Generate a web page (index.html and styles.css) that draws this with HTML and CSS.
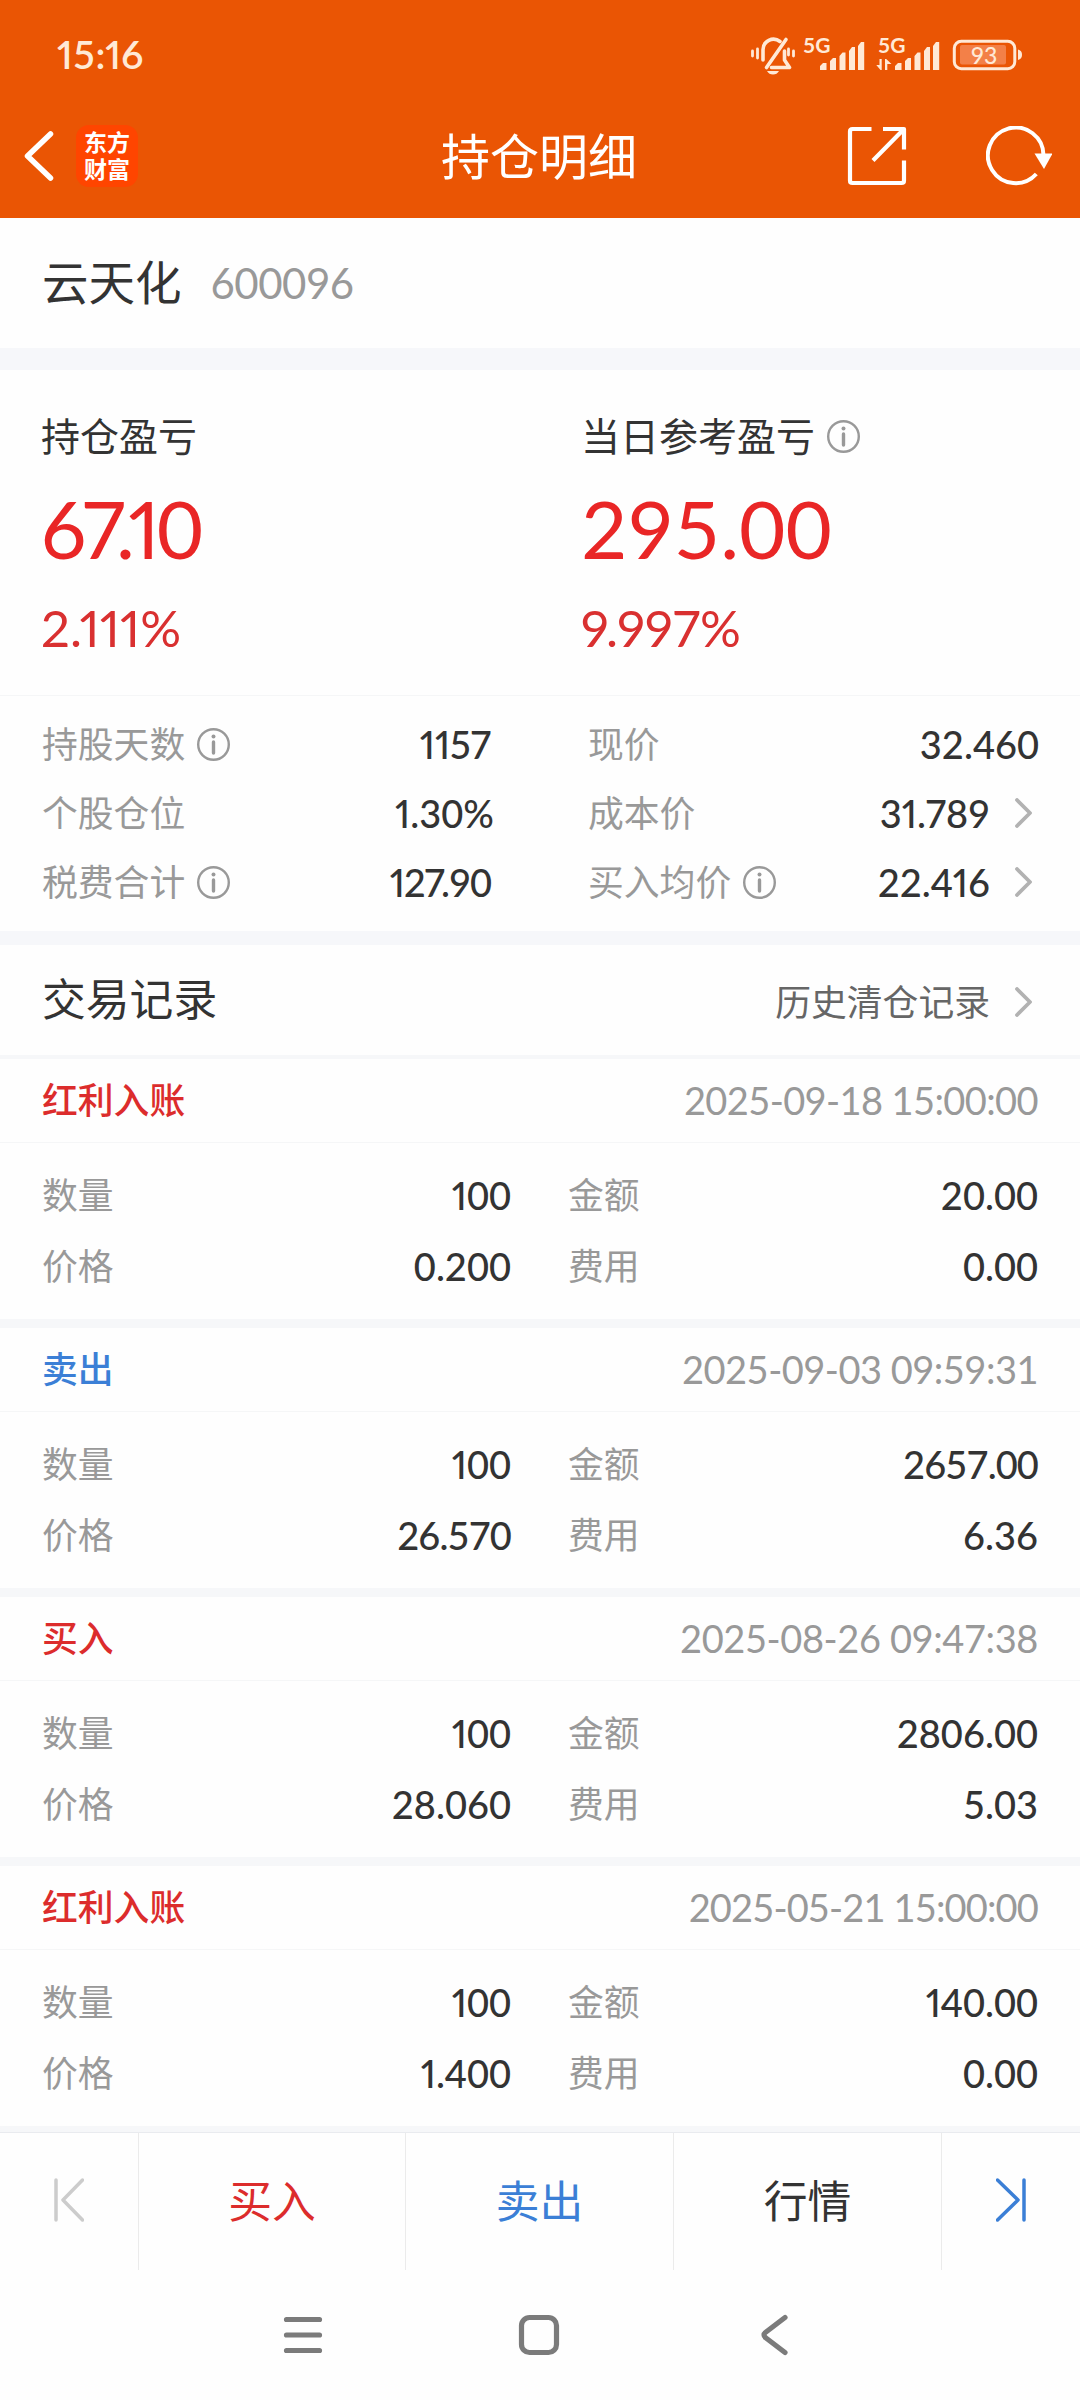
FILE: index.html
```html
<!DOCTYPE html>
<html lang="zh-CN">
<head>
<meta charset="utf-8">
<title>持仓明细</title>
<link rel="stylesheet" href="styles.css">
</head>
<body>
<svg class="defs" width="0" height="0" aria-hidden="true">
  <symbol id="info" viewBox="0 0 33 33"><circle cx="16.5" cy="16.5" r="15.3" fill="none" stroke="currentColor" stroke-width="2.4"/><circle cx="16.5" cy="8.4" r="2" fill="currentColor"/><path d="M16.5 14v11" stroke="currentColor" stroke-width="3.4" stroke-linecap="round"/></symbol>
  <symbol id="chevron" viewBox="0 0 17 30"><path d="M2 2l13 13-13 13" fill="none" stroke="currentColor" stroke-width="3.8" stroke-linecap="round" stroke-linejoin="round"/></symbol>
</svg>

<header class="top">
  <div class="status">
    <time class="clock"><i>1</i>5:<i>1</i>6</time>
    <svg class="status-icons" viewBox="750 27 274 54" fill="none" stroke="#ffe9d6">
      <g stroke-width="3.6" stroke-linecap="round" stroke-linejoin="round">
        <path d="M766.500 66.500L786 38.500"/>
        <path d="M763 59V49a10.500 10.500 0 0 1 17-8.500M784.500 50v9l5 7.500H771.500"/>
        <path d="M752.500 50v5M757.500 48v9M788.500 48v6M793.500 50v5" stroke-width="2.800"/>
      </g>
      <path d="M767 70h12q-2 3.500-6 3.500t-6-3.500z" fill="#ffe9d6" stroke="none"/>
      <g fill="#ffe9d6" stroke="none">
        <path id="bars" d="M820 65l3-3h3.500v7H820zM830 60l3-3h3v12h-6zM839.500 55l3-3.500h3V69h-6zM849 50l3-4h3v23h-6zM858 45l3-4h3.200v28H858z"/>
        <use href="#bars" x="75"/>
        <path d="M879.500 58h2.200v11h-1.200l-4.200-5h3.200zM885 58h1.200l5.300 5h-4.200v6H885z"/>
        <text class="net" x="803" y="52">5G</text>
        <text class="net" x="878" y="52">5G</text>
        <path d="M1018 48.500q4 1 4 5.200t-4 5.200z"/>
      </g>
      <rect x="954.300" y="40.300" width="60.500" height="27.400" rx="7" stroke-width="3"/>
      <rect x="960" y="44" width="46" height="19.500" rx="2" fill="#f38048" stroke="none"/>
      <text class="level" x="984" y="62.500" fill="#ffe9d6" stroke="none" text-anchor="middle">93</text>
    </svg>
  </div>
  <nav class="titlebar">
    <div class="side">
      <svg class="back" viewBox="0 0 30 50"><path d="M27 3L4 25l23 22" fill="none" stroke="#fff" stroke-width="5.500" stroke-linecap="round" stroke-linejoin="round"/></svg>
      <div class="logo"><span>东方</span><span>财富</span></div>
    </div>
    <h1>持仓明细</h1>
    <div class="side end">
      <svg class="share" viewBox="0 0 60 60" fill="none" stroke="#fff" stroke-width="4.200" stroke-linejoin="round"><path d="M24.500 3H5.500Q3 3 3 5.500v49Q3 57 5.500 57h49q2.500 0 2.500-2.500V34.500M36 3h21v20.500M57 3L26 34.500"/></svg>
      <svg class="reload" viewBox="0 0 66 60"><path d="M57.500 29.500A27.800 27.800 0 1 0 50.300 48" fill="none" stroke="#fff" stroke-width="4"/><path d="M48.500 27.500h18L58 43z" fill="#fff"/></svg>
    </div>
  </nav>
</header>

<main>
  <section class="stock"><h2>云天化</h2><span class="code">600096</span></section>

  <section class="profit">
    <div class="profit-item">
      <p class="caption">持仓盈亏</p>
      <p class="amount tight"><i>67.1</i>0</p>
      <p class="rate">2.111%</p>
    </div>
    <div class="profit-item">
      <p class="caption">当日参考盈亏<svg class="info"><use href="#info"/></svg></p>
      <p class="amount">295.00</p>
      <p class="rate">9.997%</p>
    </div>
  </section>

  <section class="facts">
    <dl>
      <div><dt>持股天数<svg class="info"><use href="#info"/></svg></dt><dd><i>1157</i></dd></div>
      <div><dt>个股仓位</dt><dd class="percent"><i>1</i>.30%</dd></div>
      <div><dt>税费合计<svg class="info"><use href="#info"/></svg></dt><dd class="tight"><i>127.</i>90</dd></div>
    </dl>
    <dl>
      <div><dt>现价</dt><dd>32.460</dd></div>
      <div><dt>成本价</dt><dd><span>3<i>1.7</i>89</span><svg class="chevron"><use href="#chevron"/></svg></dd></div>
      <div><dt>买入均价<svg class="info"><use href="#info"/></svg></dt><dd><span>22.4<i>1</i>6</span><svg class="chevron"><use href="#chevron"/></svg></dd></div>
    </dl>
  </section>

  <section class="trades">
    <header class="trades-head"><h3>交易记录</h3><a class="history">历史清仓记录<svg class="chevron"><use href="#chevron"/></svg></a></header>

    <article class="trade">
      <header><b class="red">红利入账</b><time class="t2">2025-09-18 15:00:00</time></header>
      <dl><dt>数量</dt><dd><i>1</i>00</dd><dt>金额</dt><dd>20.00</dd><dt>价格</dt><dd>0.200</dd><dt>费用</dt><dd>0.00</dd></dl>
    </article>
    <article class="trade">
      <header><b class="blue">卖出</b><time class="t1">2025-09-03 09:59:31</time></header>
      <dl><dt>数量</dt><dd><i>1</i>00</dd><dt>金额</dt><dd class="snug">2657.00</dd><dt>价格</dt><dd class="snug">26.570</dd><dt>费用</dt><dd>6.36</dd></dl>
    </article>
    <article class="trade">
      <header><b class="red">买入</b><time>2025-08-26 09:47:38</time></header>
      <dl><dt>数量</dt><dd><i>1</i>00</dd><dt>金额</dt><dd>2806.00</dd><dt>价格</dt><dd>28.060</dd><dt>费用</dt><dd>5.03</dd></dl>
    </article>
    <article class="trade">
      <header><b class="red">红利入账</b><time class="t3">2025-05-21 15:00:00</time></header>
      <dl><dt>数量</dt><dd><i>1</i>00</dd><dt>金额</dt><dd><i>1</i>40.00</dd><dt>价格</dt><dd><i>1</i>.400</dd><dt>费用</dt><dd>0.00</dd></dl>
    </article>
  </section>
</main>

<footer class="actions">
  <a class="prev"><svg viewBox="0 0 30 44"><path d="M2 2v40M28.500 2L9 22l19.500 20" /></svg></a>
  <a class="red">买入</a>
  <a class="blue">卖出</a>
  <a>行情</a>
  <a class="next"><svg viewBox="0 0 30 44"><path d="M28 2v40M1.500 2L22 22 1.500 42"/></svg></a>
</footer>

<div class="system-nav">
  <svg viewBox="0 0 42 42"><path d="M4.500 5.500h33M4.500 21h33M4.500 36.500h33"/></svg>
  <svg viewBox="0 0 42 42"><rect x="3.500" y="3.500" width="35" height="35" rx="8"/></svg>
  <svg viewBox="0 0 42 42"><path d="M31 3.500L12 18q-4 3 0 6l19 14.500"/></svg>
</div>
</body>
</html>
```
FILE: styles.css
```css
* { box-sizing: border-box; margin: 0; padding: 0; }

body {
  width: 1080px;
  height: 2400px;
  display: flex;
  flex-direction: column;
  background: #fefefe;
  color: #333;
  font-family: Lato, "Noto Sans CJK SC", sans-serif;
  font-variant-numeric: tabular-nums;
  line-height: 1;
  overflow: hidden;
}
.defs { display: none; }
h1, h2, h3, b { font-weight: 400; }
/* narrow figures inside a tabular number */
i { font-style: normal; font-variant-numeric: proportional-nums; }
svg { display: block; flex: none; }
.red { color: #dc2c2c; }
.blue { color: #3b7fd6; }

/* status bar and title */
.top { height: 218px; background: #ea5504; color: #fff; }
.status {
  height: 94px;
  padding: 15px 56px 0 57px;
  display: flex;
  align-items: center;
  justify-content: space-between;
}
.clock { font-size: 39px; font-weight: 600; color: #ffe9d6; }
.status-icons { width: 274px; height: 54px; }
.net { font: 700 21px Lato, sans-serif; }
.level { font: 500 23px Lato, sans-serif; }
.titlebar {
  height: 124px;
  padding: 0 28px 0 23px;
  display: grid;
  grid-template-columns: 1fr auto 1fr;
  align-items: center;
}
.side { display: flex; align-items: center; gap: 22px; }
.side.end { justify-content: flex-end; gap: 79px; }
.back { width: 31px; height: 50px; }
.logo {
  width: 62px;
  height: 62px;
  border-radius: 13px;
  background: #ff4500;
  display: flex;
  flex-direction: column;
  align-items: center;
  justify-content: center;
  font-size: 23px;
  font-weight: 700;
  line-height: 27px;
}
h1 { padding-left: 3px; font-size: 49px; }
.share { width: 60px; height: 60px; }
.reload { width: 66px; height: 60px; }

/* stock name */
.stock {
  height: 130px;
  padding: 0 0 1px 42px;
  display: flex;
  align-items: center;
  gap: 29px;
}
h2 { font-size: 46.500px; }
.code { font-size: 42px; color: #999; letter-spacing: -.5px; }

/* profit summary */
.profit {
  height: 348px;
  border-top: 22px solid #f6f7fa;
  border-bottom: 1px solid #f5f6f7;
  display: grid;
  grid-template-columns: 1fr 1fr;
}
.profit-item { padding: 41px 0 0 41px; }
.caption {
  height: 51px;
  display: flex;
  align-items: center;
  gap: 12px;
  font-size: 39px;
}
.info { width: 33px; height: 33px; color: #999; }
.amount { margin-top: 18px; font-size: 80px; line-height: 96px; color: #e92626; }
.amount.tight { letter-spacing: -3px; }
.rate { margin-top: 21px; font-size: 51px; line-height: 62px; color: #d93030; font-variant-numeric: proportional-nums; }

/* position facts */
.facts {
  height: 249px;
  border-bottom: 14px solid #f6f7fa;
  padding: 14px 41px 0 42px;
  display: grid;
  grid-template-columns: 449px 451px;
  justify-content: space-between;
}
.facts div { height: 69px; display: flex; align-items: center; justify-content: space-between; }
dt { display: flex; align-items: center; gap: 12px; font-size: 35.800px; color: #999; }
dd { display: flex; align-items: center; padding-bottom: 1px; font-size: 38px; font-weight: 500; }
dd.tight { letter-spacing: -1px; }
dd.snug { letter-spacing: -.9px; }
dd.percent { margin-right: -3px; }
.chevron { width: 17px; height: 30px; color: #b2b2b2; margin: 0 7px 0 25px; }

/* trade list */
.trades-head {
  height: 114px;
  border-bottom: 4px solid #f6f7f9;
  padding: 0 41px 0 42px;
  display: flex;
  align-items: center;
  justify-content: space-between;
}
h3 { font-size: 43.800px; }
.history { display: flex; align-items: center; padding-top: 5px; font-size: 35.800px; color: #666; }
.trade { height: 269px; border-bottom: 9px solid #f6f7f9; }
.trade header {
  height: 84px;
  border-bottom: 1px solid #f5f6f7;
  padding: 0 42px;
  display: flex;
  align-items: center;
  justify-content: space-between;
}
.trade b { font-size: 35.800px; font-weight: 500; }
.trade time { padding-bottom: 1px; font-size: 38px; color: #999; letter-spacing: -.4px; }
.trade .t1 { letter-spacing: -.5px; }
.trade .t2 { letter-spacing: -.6px; }
.trade .t3 { letter-spacing: -.85px; }
.trade dl {
  padding: 17px 42px 0;
  display: grid;
  grid-template-columns: 100px 369px 157px 370px;
  grid-auto-rows: 71px;
  align-items: center;
}
.trade dt:nth-of-type(even) { padding-left: 57px; }
.trade dd { justify-content: flex-end; }

/* bottom actions */
.actions {
  height: 138px;
  margin-top: -3px;
  border-top: 1px solid #e9ebef;
  display: grid;
  grid-template-columns: 139px 267px 268px 268px 138px;
  background: #fefefe;
  font-size: 43.800px;
  z-index: 1;
}
.actions a { display: flex; align-items: center; justify-content: center; border-right: 1px solid #ebebeb; }
.actions a:last-child { border-right: 0; }
.actions svg { width: 30px; height: 44px; margin-bottom: 4px; fill: none; stroke-width: 3.500; stroke-linecap: round; stroke-linejoin: round; }
.prev { stroke: #ccc; }
.next { stroke: #3b7fd6; }

/* system navigation */
.system-nav { flex: 1; display: flex; justify-content: center; gap: 194px; padding: 44px 2px 0 0; }
.system-nav svg { width: 42px; height: 42px; fill: none; stroke: #7b7b7b; stroke-width: 5.200; stroke-linecap: round; stroke-linejoin: round; }
```
